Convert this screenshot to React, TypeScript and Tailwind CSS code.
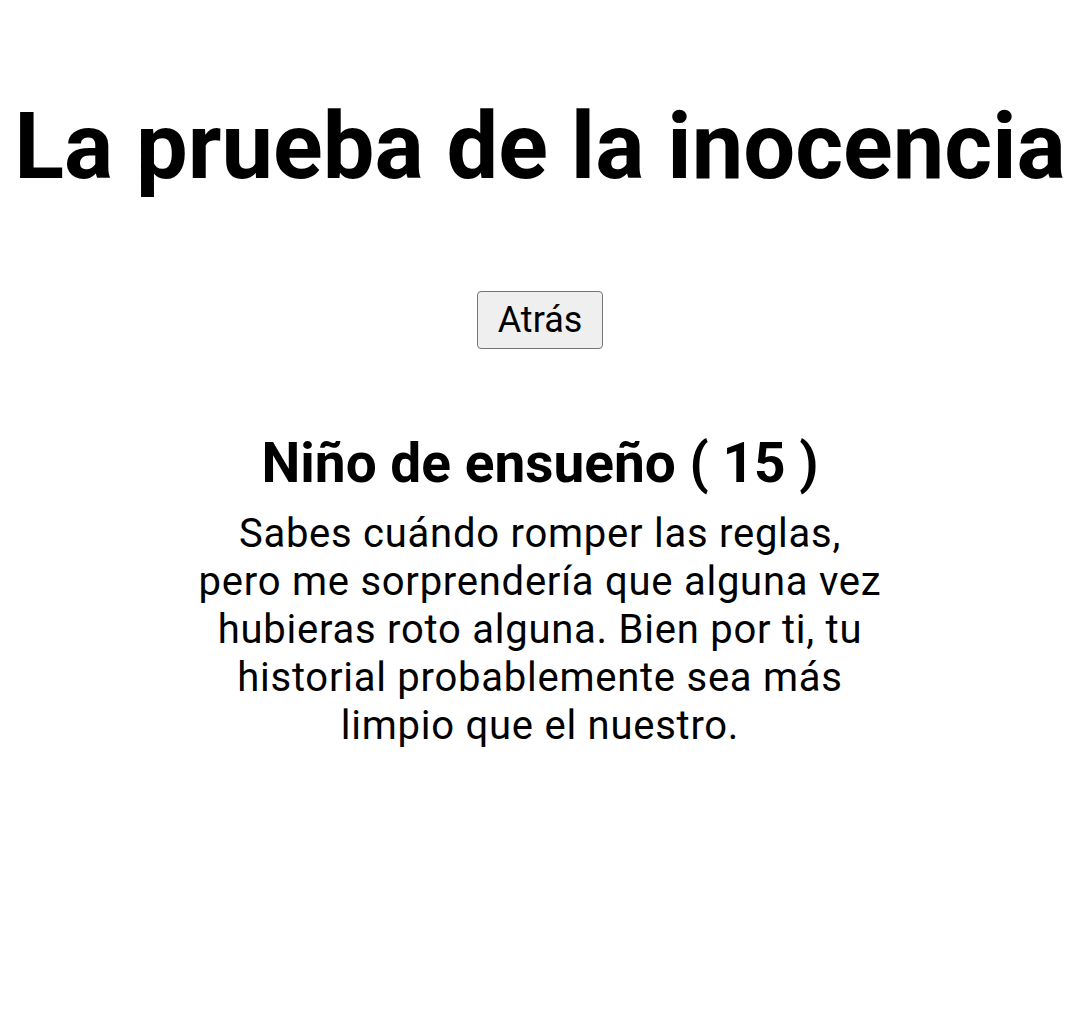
export default function App() {
  return (
    <div className="min-h-[1021px] bg-white text-black flex flex-col items-center" style={{ fontFamily: "Roboto, sans-serif" }}>
      <h1 className="mt-[95px] text-[92px] font-bold leading-[104px] whitespace-nowrap text-center">La prueba de la inocencia</h1>
      <button className="mt-[92px] h-[58px] px-[20px] text-[36px] leading-none bg-[#efefef] border border-[#767676] rounded-[4px] text-black">Atrás</button>
      <h2 className="mt-[82px] text-[55px] font-bold leading-[64px] text-center">Niño de ensueño ( 15 )</h2>
      <p className="mt-[15px] w-[684px] text-[40px] leading-[48px] tracking-[0.75px] text-center">
        Sabes cuándo romper las reglas, pero me sorprendería que alguna vez hubieras roto alguna. Bien por ti, tu historial probablemente sea más limpio que el nuestro.
      </p>
    </div>
  );
}
